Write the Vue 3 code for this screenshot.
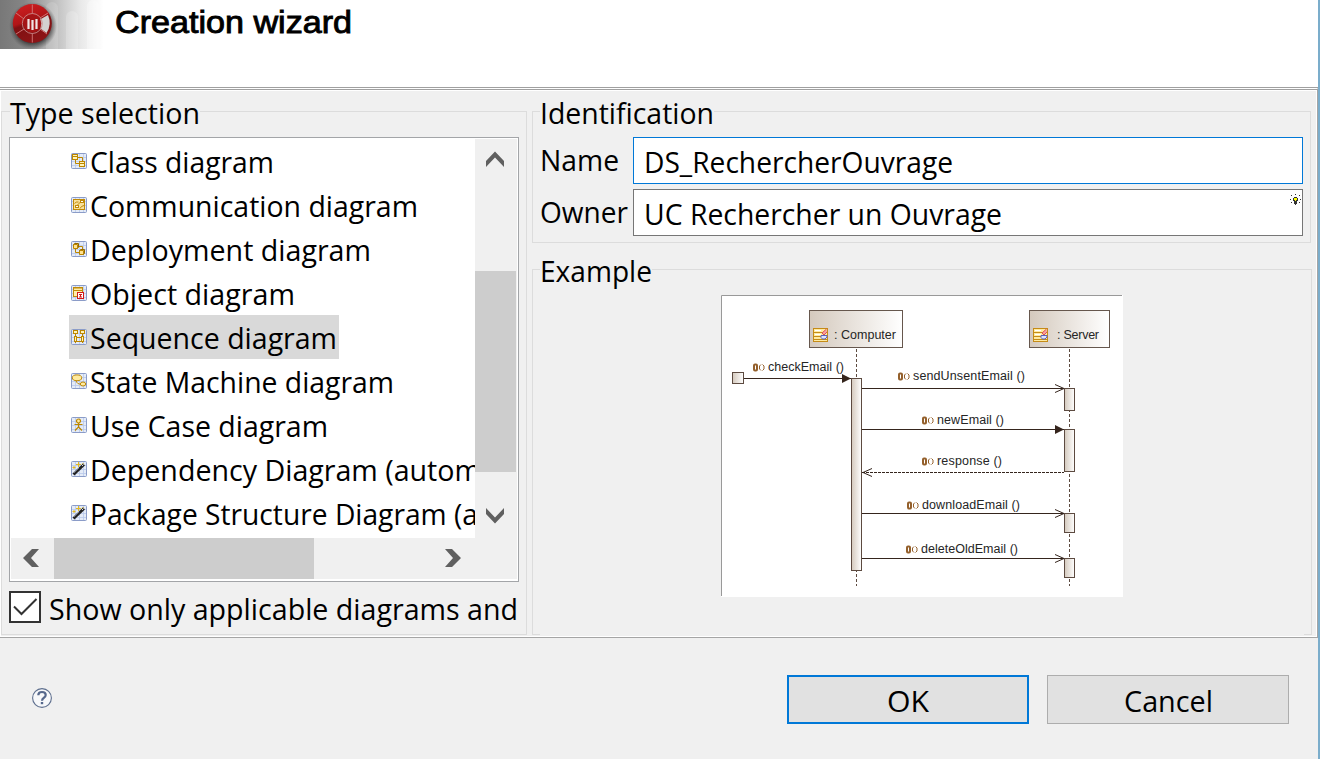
<script setup>
import { h } from 'vue'

// Single line of text set to an exact advance width.
const Label = (p) =>
  h('svg', { class: 'label', width: p.w, height: p.height || 44 }, [
    h('text', { x: 0, y: p.base, textLength: p.w, lengthAdjust: 'spacingAndGlyphs' }, p.text),
  ])
Label.props = ['text', 'w', 'base', 'height']

const items = [
  { text: 'Class diagram', w: 184, icon: 'class' },
  { text: 'Communication diagram', w: 328, icon: 'comm' },
  { text: 'Deployment diagram', w: 281, icon: 'deploy' },
  { text: 'Object diagram', w: 205, icon: 'object' },
  { text: 'Sequence diagram', w: 247, icon: 'seq', selected: true },
  { text: 'State Machine diagram', w: 304, icon: 'state' },
  { text: 'Use Case diagram', w: 238, icon: 'usecase' },
  { text: 'Dependency Diagram (autom', w: 391, icon: 'wand' },
  { text: 'Package Structure Diagram (a', w: 388, icon: 'wand' },
]

const messages = [
  { text: 'checkEmail ()', x: 768, w: 76, y: 371, ix: 753 },
  { text: 'sendUnsentEmail ()', x: 913, w: 112, y: 380, ix: 898 },
  { text: 'newEmail ()', x: 937, w: 67, y: 424, ix: 922 },
  { text: 'response ()', x: 937, w: 65, y: 465, ix: 922 },
  { text: 'downloadEmail ()', x: 922, w: 98, y: 509, ix: 907 },
  { text: 'deleteOldEmail ()', x: 921, w: 97, y: 553, ix: 906 },
]
const activations = [
  { y: 388, h: 22 },
  { y: 429, h: 42 },
  { y: 513, h: 19 },
  { y: 558, h: 19 },
]
const heads = [
  { x: 809, w: 93, text: ': Computer', tx: 834, tw: 62 },
  { x: 1029, w: 80, text: ': Server', tx: 1057, tw: 42 },
]
</script>

<template>
  <div class="wizard">
    <header class="banner">
      <svg class="logo" width="108" height="49" viewBox="0 0 108 49">
        <defs>
          <linearGradient id="fade" x1="0" x2="1" y1="0" y2="0">
            <stop offset="0" stop-color="#787878" />
            <stop offset=".22" stop-color="#858585" />
            <stop offset=".45" stop-color="#b4b4b4" />
            <stop offset=".75" stop-color="#e9e9e9" />
            <stop offset=".96" stop-color="#fff" />
          </linearGradient>
          <linearGradient id="ball" x1="0" x2=".35" y1="0" y2="1">
            <stop offset="0" stop-color="#d32022" />
            <stop offset=".5" stop-color="#b01517" />
            <stop offset=".58" stop-color="#801012" />
            <stop offset="1" stop-color="#8c1416" />
          </linearGradient>
          <radialGradient id="halo">
            <stop offset=".7" stop-color="#222" stop-opacity=".75" />
            <stop offset="1" stop-color="#444" stop-opacity="0" />
          </radialGradient>
        </defs>
        <rect width="108" height="49" fill="url(#fade)" />
        <path d="M46 49V8a6 6 0 0 1 12 0v41z" fill="#fff" opacity=".14" />
        <path d="M66 49V17a6 6 0 0 1 12 0v32z" fill="#fff" opacity=".2" />
        <path d="M87 49V6a6 6 0 0 1 12 0v43z" fill="#fff" opacity=".3" />
        <circle cx="33" cy="26" r="24" fill="url(#halo)" />
        <circle cx="32.300" cy="23.500" r="19.500" fill="url(#ball)" />
        <path d="M40 19.500 48 15a19 19 0 0 1-1.500 18l-6-4.500z" fill="#d4d2d0" />
        <g stroke="#d27c7c" stroke-width=".9" fill="none">
          <path d="M32.300 4.500v9M32.300 33.500v9M16 13l8 6M16 34l8-5M40 18l8-5M40 29l7 5" />
          <circle cx="32.300" cy="23.500" r="10" stroke="#c78b8b" />
        </g>
        <circle cx="32.300" cy="23.500" r="9" fill="#a51416" />
        <path d="M28.500 19v10M32.500 20v10M36.500 19v10" stroke="#f1e6e6" stroke-width="2.200" />
      </svg>
      <Label class="title" text="Creation wizard" :w="237" :base="33" />
    </header>

    <main class="body">
      <section class="group types">
        <Label class="caption" text="Type selection" :w="190" :base="32" :height="36" />
        <div class="list">
          <div class="rows">
            <div v-for="it in items" :key="it.text" class="row">
              <div class="entry" :class="{ selected: it.selected }">
                <svg class="icon" width="16" height="16" viewBox="0 0 16 16">
                  <rect x=".5" y=".5" width="15" height="15" rx="1" fill="#e4ebf7" stroke="#8b9cc8" />
                  <path d="M4.500 1v14M8.500 1v14M12.500 1v14M1 4.500h14M1 8.500h14M1 12.500h14" stroke="#b9c9ea" stroke-width=".8" />
                  <g v-if="it.icon === 'class'" fill="#fff4b8" stroke="#bd8700">
                    <path d="M4.500 7v3.500H8M7 4.500h4.500V8" fill="none" />
                    <rect x="1.500" y="1.500" width="5" height="5" /><path d="M2 3.500h4" />
                    <rect x="8.500" y="8.500" width="5" height="5" /><path d="M9 10.500h4" />
                  </g>
                  <g v-else-if="it.icon === 'comm'" fill="#fff1b4" stroke="#c08a08">
                    <rect x="2.500" y="2.500" width="11" height="10" fill="#f8e09a" />
                    <path d="M3.500 6.500q1.500-2 4-1.500M9 11.500q1-2.500 4-3M6.500 8l3-3" fill="none" />
                    <rect x="4.500" y="8.500" width="3" height="2" fill="#fff" /><rect x="9.500" y="3.500" width="3" height="2" fill="#fff" />
                  </g>
                  <g v-else-if="it.icon === 'deploy'" fill="#ffe394" stroke="#bd8700">
                    <path d="M4.500 8v3.500H8M8 5.500h3.500V9" fill="none" />
                    <path d="M2.500 3.500h4v4h-4zM8.500 9.500h4v4h-4z" /><path d="m2.500 3.500 1-1h4v4l-1 1M8.500 9.500l1-1h4v4l-1 1" stroke="#946900" fill="none" />
                  </g>
                  <g v-else-if="it.icon === 'object'" fill="#ffedaa" stroke="#c08a08">
                    <rect x="2.500" y="2.500" width="9" height="9" /><path d="M2 5.500h10M2 3h10" />
                    <rect x="6.500" y="7.500" width="6" height="6" fill="#fff" stroke="#d31919" /><path d="M8 9.500h3M8 12h3M9.500 9v3" stroke="#d31919" />
                  </g>
                  <g v-else-if="it.icon === 'seq'" fill="#fff4b8" stroke="#bd8700">
                    <rect x="2.500" y="1.500" width="4" height="3" /><rect x="9.500" y="1.500" width="4" height="3" />
                    <path d="M4.500 5v9M11.500 5v9M5 8.500h6M5 12.500h6" fill="none" /><rect x="3.500" y="7.500" width="2" height="5" /><rect x="10.500" y="7.500" width="2" height="5" />
                  </g>
                  <g v-else-if="it.icon === 'state'" fill="#ffeb9f" stroke="#c08a08">
                    <path d="M5 7.500q1 4 5 3.500" fill="none" />
                    <ellipse cx="6" cy="4.800" rx="4.700" ry="2.900" /><ellipse cx="12" cy="11" rx="2.700" ry="2" />
                  </g>
                  <g v-else-if="it.icon === 'usecase'" fill="#ffeb9f" stroke="#bd8700" stroke-width="1.200">
                    <circle cx="7.500" cy="4" r="2" /><path d="M7.500 6v4L4 13.500M7.500 10l3.500 3.500M3.500 7.500h8" fill="none" />
                  </g>
                  <g v-else fill="none">
                    <path d="M7.500 1v5M5 3.500h5M3 5v3M1.500 6.500h3M12 2v2" stroke="#e4b91f" />
                    <path d="M2.500 13.500 13 3.500" stroke="#222" stroke-width="2.800" /><path d="m3 12 5-5" stroke="#7f8796" stroke-width=".8" /><path d="m11 5 1.500-1.500" stroke="#ddd" />
                  </g>
                </svg>
                <Label :text="it.text" :w="it.w" :base="34" />
              </div>
            </div>
          </div>
          <div class="vbar">
            <svg width="42" height="42" viewBox="0 0 42 42"><path d="M11 22 20 12.500l9 9.500v6l-9-9.500-9 9.500z" /></svg>
            <div class="vthumb"></div>
            <svg width="42" height="42" viewBox="0 0 42 42"><path d="M11 21v6l9 9.500 9-9.500v-6l-9 9.500z" /></svg>
          </div>
          <div class="hbar">
            <svg width="43" height="41" viewBox="0 0 43 41"><path d="M28 11h-7l-9 9 9 9h7l-8-9z" /></svg>
            <div class="hthumb"></div>
            <svg class="right" width="43" height="41" viewBox="0 0 43 41"><path d="M15 11h7l9 9-9 9h-7l8-9z" /></svg>
          </div>
        </div>
        <div class="check">
          <svg width="32" height="32" viewBox="0 0 32 32">
            <rect x="1" y="1" width="30" height="30" fill="#fff" stroke="#333" stroke-width="2" />
            <path d="m5 15.500 7.500 7.500L27.500 8" fill="none" stroke="#333" stroke-width="2" />
          </svg>
          <Label text="Show only applicable diagrams and" :w="469" :base="29" :height="32" />
        </div>
      </section>

      <div class="side">
        <section class="group ident">
          <Label class="caption" text="Identification" :w="174" :base="32" :height="36" />
          <div class="field">
            <Label class="name" text="Name" :w="79" :base="33.500" :height="47" />
            <div class="input focus"><Label text="DS_RechercherOuvrage" :w="309" :base="35" /></div>
          </div>
          <div class="field">
            <Label class="name" text="Owner" :w="88" :base="33.500" :height="47" />
            <div class="input">
              <Label text="UC Rechercher un Ouvrage" :w="358" :base="35" />
              <svg class="bulb" width="11" height="11" viewBox="0 0 11 11" shape-rendering="crispEdges">
                <path d="M5 0h1v1H5zM1 1h1v1H1zM9 1h1v1H9zM0 5h1v1H0zM10 5h1v1h-1zM1 8h1v1H1zM9 8h1v1H9zM4 3h3v1h1v3H7v3H6v1H5v-1H4V7H3V4h1z" fill="#333" />
                <path d="M4 4h3v2H6v1H5V6H4z" fill="#ff0" />
              </svg>
            </div>
          </div>
        </section>

        <section class="group example">
          <Label class="caption" text="Example" :w="112" :base="32" :height="36" />
          <svg class="diagram" width="402" height="302" viewBox="721 295 402 302">
            <defs>
              <linearGradient id="box"><stop offset="0" stop-color="#d4c9bd" /><stop offset="1" stop-color="#fff" /></linearGradient>
            </defs>
            <rect x="721" y="295" width="402" height="302" fill="#fff" />
            <path d="M721.500 596V295.500H1122" fill="none" stroke="#999" />
            <g stroke="#5c4a40" fill="none" stroke-dasharray="3 2">
              <path d="M856.500 349V586M1069.500 349V586" />
            </g>
            <g v-for="b in heads" :key="b.text">
              <rect :x="b.x + .5" y="310.500" :width="b.w" height="37" fill="url(#box)" stroke="#66574d" />
              <g :transform="`translate(${b.x + 4} 328)`">
                <rect x=".5" y=".5" width="14" height="13" fill="#ffeaa0" stroke="#c58b16" />
                <path d="M1 4.500h8M1 8.500h9M1 11.500h13" stroke="#c58b16" />
                <path d="M2 2.500h6M2 6.500h6" stroke="#fff" />
                <path d="M13.500 1 9 5l2 2 3-3" fill="#f4a0a0" stroke="#e05252" />
                <path d="M8 7.500h6v1.500l-2 2H9.500L8 9.500z" fill="#dce2ff" stroke="#5a62b8" />
              </g>
              <text :x="b.tx" y="339" :textLength="b.tw">{{ b.text }}</text>
            </g>
            <rect x="851.500" y="378.500" width="10" height="192" fill="url(#box)" stroke="#5c4a40" />
            <rect v-for="a in activations" :key="a.y" x="1064.500" :y="a.y + .5" width="10" :height="a.h" fill="url(#box)" stroke="#5c4a40" />
            <rect x="732.500" y="372.500" width="11" height="11" fill="url(#box)" stroke="#5c4a40" />
            <g stroke="#35251d" fill="none">
              <path d="M744 378.500H851M862 388.500H1064M862 429.500H1064M862 513.500H1064M862 558.500H1064" />
              <path d="M862 472.500H1064" stroke-dasharray="3 1" />
              <path d="m1055 384.500 9 4-9 4M1055 509.500l9 4-9 4M1055 554.500l9 4-9 4M872 468.500l-9 4 9 4" />
            </g>
            <path d="M842 374v9l9-4.500zM1055 425v9l9-4.500z" fill="#35251d" />
            <g v-for="m in messages" :key="m.text">
              <g :transform="`translate(${m.ix} ${m.y - 7})`" fill="none" stroke="#94602c">
                <rect x="1" y=".5" width="3" height="6" rx="1" stroke-width="2" />
                <path d="M8 .5 6.500 2v3L8 6.500M9.500.5 11 2v3L9.500 6.500" />
              </g>
              <text :x="m.x" :y="m.y" :textLength="m.w">{{ m.text }}</text>
            </g>
          </svg>
        </section>
      </div>
    </main>

    <footer class="footer">
      <svg class="help" width="22" height="22" viewBox="0 0 22 22">
        <circle cx="11" cy="11" r="9.400" fill="#f7f8fa" stroke="#5e6f8e" stroke-width="1.100" />
        <path d="M7.300 8.300q0-3.300 3.700-3.300t3.700 3q0 1.700-1.800 2.800T11 13.700" fill="none" stroke="#56688c" stroke-width="2.200" />
        <rect x="9.800" y="15" width="2.400" height="2.200" fill="#56688c" />
      </svg>
      <button class="btn primary"><Label text="OK" :w="42" :base="35" :height="45" /></button>
      <button class="btn"><Label text="Cancel" :w="89" :base="36" :height="47" /></button>
    </footer>
  </div>
</template>

<style>
body { background: #f0f0f0; overflow: hidden; }
.label { display: block; flex: none; overflow: visible; }
</style>

<style scoped>
.wizard {
  box-sizing: border-box;
  width: 1320px;
  height: 759px;
  display: flex;
  flex-direction: column;
  background: #f0f0f0;
  border-right: 2px solid #7badcb;
  font: 29.5px "Open Sans", "Noto Sans", sans-serif;
}
svg { display: block; flex: none; }
.banner { height: 87px; background: #fff; display: flex; }
.title {
  margin-left: 7px;
  font: 31px "Liberation Sans", Arial, sans-serif;
  stroke: #000;
  stroke-width: 0.9px;
}
.body {
  box-sizing: border-box;
  height: 551px;
  display: flex;
  gap: 5px;
  padding: 21px 0 0 1px;
  border: 1px solid #a5a5a5;
  border-top: 3px double #a0a0a0;
  border-left: 0;
  background: linear-gradient(#f0f0f0, #f0f0f0) padding-box, #fff;
  box-shadow: inset 0 0 0 1px #fff;
}
.group { box-sizing: border-box; border: 1px solid #dcdcdc; }
.caption { margin: -20px 0 9px 7px; background: #f0f0f0; }
.types { width: 526px; height: 524px; }
.types .caption { margin-left: 8px; }
.list {
  box-sizing: border-box;
  width: 510px;
  height: 445px;
  margin-left: 7px;
  padding: 1px;
  border: 1px solid #a3a5a8;
  background: #fff;
  display: grid;
  grid-template: 399px 41px / 464px 42px;
}
.rows { overflow: hidden; }
.row { height: 44px; padding-left: 58px; display: flex; }
.entry { display: flex; gap: 3px; padding: 0 2px; }
.entry.selected { background: #d9d9d9; }
.icon { margin-top: 14px; }
.vbar { background: #f0f0f0; display: flex; flex-direction: column; fill: #606060; }
.vthumb { width: 41px; height: 201px; margin: 90px 0 15px; background: #cdcdcd; }
.hbar { grid-column: 1 / 3; background: #f0f0f0; display: flex; fill: #606060; }
.hthumb { width: 260px; background: #cdcdcd; }
.right { margin-left: 116px; }
.check { display: flex; margin: 9px 0 0 7px; gap: 8px; }
.side { display: flex; flex-direction: column; gap: 26px; }
.ident { width: 779px; height: 132px; }
.field { display: flex; margin-bottom: 5px; padding-left: 7px; }
.field .name { width: 93px; }
.input {
  box-sizing: border-box;
  width: 670px;
  height: 47px;
  padding-left: 10px;
  border: 1px solid #767676;
  background: #fff;
  display: flex;
  justify-content: space-between;
}
.input.focus { border-color: #0078d7; }
.bulb { margin: 4px 1px 0 0; }
.example { position: relative; width: 780px; height: 366px; }
.example::after {
  content: "";
  position: absolute;
  left: 7px;
  right: 7px;
  bottom: -1px;
  height: 1px;
  background: #f0f0f0;
}
.diagram { margin-left: 188px; font: 12.5px "Liberation Sans", Arial, sans-serif; fill: #252525; }
.footer { display: flex; padding: 37px 0 0 31px; }
.help { margin-top: 12px; }
.btn {
  box-sizing: border-box;
  width: 242px;
  height: 49px;
  margin: 0 0 0 18px;
  padding: 0;
  border: 1px solid #adadad;
  background: #e1e1e1;
  font: inherit;
  display: flex;
  justify-content: center;
}
.btn.primary { border: 2px solid #0078d7; margin-left: 734px; }
</style>
